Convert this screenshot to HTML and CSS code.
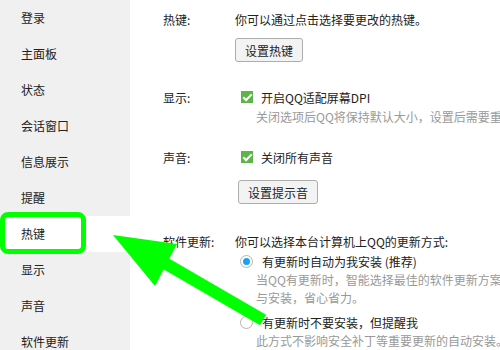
FILE: index.html
```html
<!DOCTYPE html>
<html lang="zh-CN">

<head>
    <meta charset="UTF-8">
    <title>QQ 设置 - 热键</title>
    <link rel="stylesheet" href="styles.css">
</head>

<body>
    <div class="window">
        <ul class="sidebar">
            <li>登录</li>
            <li>主面板</li>
            <li>状态</li>
            <li>会话窗口</li>
            <li>信息展示</li>
            <li>提醒</li>
            <li class="active">热键</li>
            <li>显示</li>
            <li>声音</li>
            <li>软件更新</li>
        </ul>

        <div class="content">
            <div class="section sec-hotkey">
                <div class="row">
                    <span class="label">热键:</span>
                    <span>你可以通过点击选择要更改的热键。</span>
                </div>
                <div class="indent"><button class="btn btn-hotkey">设置热键</button></div>
            </div>

            <div class="section sec-display">
                <div class="row">
                    <span class="label">显示:</span>
                    <span class="check on"></span>
                    <span class="opt">开启QQ适配屏幕DPI</span>
                </div>
                <div class="hint">关闭选项后QQ将保持默认大小，设置后需要重启QQ才能生效。</div>
            </div>

            <div class="section sec-sound">
                <div class="row">
                    <span class="label">声音:</span>
                    <span class="check on"></span>
                    <span class="opt">关闭所有声音</span>
                </div>
                <div class="indent"><button class="btn btn-sound">设置提示音</button></div>
            </div>

            <div class="section sec-update">
                <div class="row">
                    <span class="label">软件更新:</span>
                    <span>你可以选择本台计算机上QQ的更新方式:</span>
                </div>
                <div class="row radio-row">
                    <span class="radio on"></span>
                    <span class="opt">有更新时自动为我安装 (推荐)</span>
                </div>
                <div class="hint">当QQ有更新时，智能选择最佳的软件更新方案进行下载</div>
                <div class="hint">与安装，省心省力。</div>
                <div class="row radio-row second">
                    <span class="radio"></span>
                    <span class="opt">有更新时不要安装，但提醒我</span>
                </div>
                <div class="hint">此方式不影响安全补丁等重要更新的自动安装。</div>
            </div>
        </div>

        <!-- annotation over the screenshot -->
        <div class="mark"></div>
        <svg class="arrow" width="500" height="350" viewBox="0 0 500 350">
            <polygon points="113,235 177,244 155,286" fill="#00ff00" />
            <line x1="163" y1="262" x2="263" y2="320" stroke="#00ff00" stroke-width="12" />
        </svg>
    </div>
</body>

</html>
```

FILE: styles.css
```css
body {
    margin: 0;
    font-family: "Noto Sans CJK SC", "Microsoft YaHei", sans-serif;
    font-size: 12px;
    color: #222;
    background: #fff;
}

.window {
    position: relative;
    display: flex;
    width: 500px;
    height: 350px;
    overflow: hidden;
}

.sidebar {
    list-style: none;
    margin: 0;
    padding: 0;
    width: 130px;
    flex-shrink: 0;
    background: #f0f0f0;
}

.sidebar li {
    height: 36px;
    line-height: 36px;
    padding-left: 21px;
    color: #222;
}

.sidebar li.active {
    background: #fff;
}

.content {
    flex: 1;
    padding: 10px 0 0 33px;
    white-space: nowrap;
    overflow: hidden;
}

.row {
    display: flex;
    align-items: center;
    height: 18px;
}

.label {
    width: 72px;
    flex-shrink: 0;
}

.indent {
    padding-left: 72px;
}

.hint {
    padding-left: 93px;
    height: 18px;
    line-height: 18px;
    color: #999;
}

.opt {
    margin-left: 8px;
}

.btn {
    font-family: inherit;
    font-size: 12px;
    color: #222;
    height: 24px;
    padding: 0 9px;
    background: #f3f3f3;
    border: 1px solid #adadad;
    border-radius: 3px;
}

.btn-hotkey {
    margin-top: 10px;
}

.btn-sound {
    margin-top: 14px;
    margin-left: 3px;
}

.sec-display {
    margin-top: 26px;
}

.sec-display .hint {
    margin-top: 2px;
}

.sec-sound {
    margin-top: 22px;
}

.sec-update {
    margin-top: 28px;
}

.check {
    position: relative;
    width: 12px;
    height: 12px;
    margin-left: 6px;
    background: #5db548;
}

.check.on::after {
    content: "";
    position: absolute;
    left: 4px;
    top: 1px;
    width: 3px;
    height: 7px;
    border: solid #fff;
    border-width: 0 2px 2px 0;
    transform: rotate(45deg);
}

.radio-row {
    margin-top: 2px;
    padding-left: 72px;
}

.radio-row.second {
    margin-top: 6px;
}

.radio {
    position: relative;
    box-sizing: border-box;
    width: 13px;
    height: 13px;
    margin-left: 5px;
    border: 1px solid #b5b5b5;
    border-radius: 50%;
    background: #fff;
}

.radio.on::after {
    content: "";
    position: absolute;
    left: 2px;
    top: 2px;
    width: 7px;
    height: 7px;
    border-radius: 50%;
    background: #18a3f0;
}

.radio-row .opt {
    margin-left: 9px;
}

.radio-row + .hint {
    margin-top: 1px;
}

.mark {
    position: absolute;
    left: 0;
    top: 212px;
    width: 76px;
    height: 32px;
    border: 5px solid #00ff00;
    border-radius: 8px;
}

.arrow {
    position: absolute;
    left: 0;
    top: 0;
    pointer-events: none;
}
```
